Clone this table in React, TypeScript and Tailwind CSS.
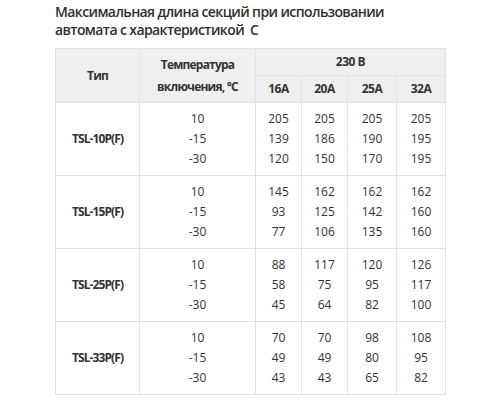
const rows = [
  { type: "TSL-10P(F)", values: [["205", "205", "205", "205"], ["139", "186", "190", "195"], ["120", "150", "170", "195"]] },
  { type: "TSL-15P(F)", values: [["145", "162", "162", "162"], ["93", "125", "142", "160"], ["77", "106", "135", "160"]] },
  { type: "TSL-25P(F)", values: [["88", "117", "120", "126"], ["58", "75", "95", "117"], ["45", "64", "82", "100"]] },
  { type: "TSL-33P(F)", values: [["70", "70", "98", "108"], ["49", "49", "80", "95"], ["43", "43", "65", "82"]] },
];

const temps = ["10", "-15", "-30"];
const currents = ["16A", "20A", "25A", "32A"];

export default function App() {
  return (
    <div className="w-[500px] h-[400px] bg-white overflow-hidden text-[#333] font-['Open_Sans',sans-serif]">
      <div className="pl-[55px] pt-[3px]">
        <h2 className="text-[14px] leading-[18px] font-semibold tracking-[-0.6px] text-[#2f2f2f] w-[340px]">
          Максимальная длина секций при использовании автомата с характеристикой&nbsp; C
        </h2>
      </div>
      <table className="ml-[55px] mt-[9px] border-collapse text-[12px]">
        <colgroup>
          <col className="w-[84px]" />
          <col className="w-[116px]" />
          <col className="w-[46px]" />
          <col className="w-[46px]" />
          <col className="w-[49px]" />
          <col className="w-[49px]" />
        </colgroup>
        <thead className="bg-[#efefef]">
          <tr className="h-[27px]">
            <th rowSpan={2} className="border border-[#e2e2e2] font-bold tracking-[-0.8px]">Тип</th>
            <th rowSpan={2} className="border border-[#e2e2e2] font-bold tracking-[-0.8px] leading-[22px]">
              Температура
              <br />
              включения, °C
            </th>
            <th colSpan={4} className="border border-[#e2e2e2] font-bold tracking-[-0.5px]">230 В</th>
          </tr>
          <tr className="h-[27px]">
            {currents.map((c) => (
              <th key={c} className="border border-[#e2e2e2] font-bold tracking-[-0.5px]">{c}</th>
            ))}
          </tr>
        </thead>
        <tbody>
          {rows.map((r) => (
            <tr key={r.type} className="h-[73px]">
              <td className="border border-[#e2e2e2] text-center font-bold tracking-[-0.9px]">{r.type}</td>
              <td className="border border-[#e2e2e2] text-center leading-[20px]">
                {temps.map((t) => (
                  <div key={t}>{t}</div>
                ))}
              </td>
              {currents.map((c, ci) => (
                <td key={c} className="border border-[#e2e2e2] text-center leading-[20px]">
                  {r.values.map((v, vi) => (
                    <div key={vi}>{v[ci]}</div>
                  ))}
                </td>
              ))}
            </tr>
          ))}
        </tbody>
      </table>
    </div>
  );
}
